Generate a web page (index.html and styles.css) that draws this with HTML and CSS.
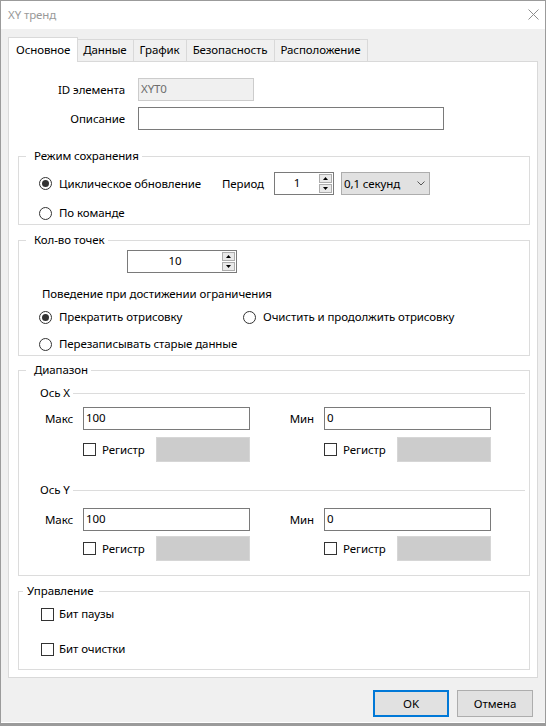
FILE: index.html
```html
<!DOCTYPE html>
<html lang="ru">
<head>
<meta charset="utf-8">
<title>XY тренд</title>
<link rel="stylesheet" href="styles.css">
</head>
<body>
<div class="window">
  <div class="titlebar">
    <span class="title">XY тренд</span>
    <svg class="close" width="11" height="11" viewBox="0 0 11 11"><path d="M0.5 0.5L10.5 10.5M10.5 0.5L0.5 10.5"/></svg>
  </div>
  <div class="client">
    <div class="tabs">
      <div class="tab active">Основное</div>
      <div class="tab">Данные</div>
      <div class="tab">График</div>
      <div class="tab">Безопасность</div>
      <div class="tab">Расположение</div>
    </div>
    <div class="page">
      <div class="form-row row-id">
        <span class="row-label">ID элемента</span>
        <div class="field field-id">XYT0</div>
      </div>
      <div class="form-row row-desc">
        <span class="row-label">Описание</span>
        <div class="field field-desc"></div>
      </div>

      <fieldset class="group group-save">
        <legend>Режим сохранения</legend>
        <div class="line line-cyclic">
          <span class="option opt-cyclic"><span class="radio checked"></span>Циклическое обновление</span>
          <span class="period">Период</span>
          <div class="spin spin-period">
            <span class="spin-value">1</span>
            <span class="spin-btns">
              <span class="spin-btn"><svg width="5" height="3" viewBox="0 0 5 3"><path d="M0 3L2.5 0L5 3Z"/></svg></span>
              <span class="spin-btn"><svg width="5" height="3" viewBox="0 0 5 3"><path d="M0 0L5 0L2.5 3Z"/></svg></span>
            </span>
          </div>
          <div class="combo">
            <span class="combo-value">0,1 секунд</span>
            <svg class="chevron" width="8" height="5" viewBox="0 0 8 5"><path d="M0.5 0.5L4 4L7.5 0.5"/></svg>
          </div>
        </div>
        <div class="line line-cmd">
          <span class="option"><span class="radio"></span>По команде</span>
        </div>
      </fieldset>

      <fieldset class="group group-points">
        <legend>Кол-во точек</legend>
        <div class="spin spin-points">
          <span class="spin-value">10</span>
          <span class="spin-btns">
            <span class="spin-btn"><svg width="5" height="3" viewBox="0 0 5 3"><path d="M0 3L2.5 0L5 3Z"/></svg></span>
            <span class="spin-btn"><svg width="5" height="3" viewBox="0 0 5 3"><path d="M0 0L5 0L2.5 3Z"/></svg></span>
          </span>
        </div>
        <div class="caption">Поведение при достижении ограничения</div>
        <div class="line line-limit">
          <span class="option opt-stop"><span class="radio checked"></span>Прекратить отрисовку</span>
          <span class="option"><span class="radio"></span>Очистить и продолжить отрисовку</span>
        </div>
        <div class="line line-overwrite">
          <span class="option"><span class="radio"></span>Перезаписывать старые данные</span>
        </div>
      </fieldset>

      <fieldset class="group group-range">
        <legend>Диапазон</legend>
        <div class="axis-head axis-x"><span>Ось X</span><span class="rule"></span></div>
        <div class="axis-grid limits">
          <span class="axis-label">Макс</span>
          <div class="field field-num">100</div>
          <span class="axis-label">Мин</span>
          <div class="field field-num">0</div>
        </div>
        <div class="axis-grid regs regs-x">
          <span></span>
          <div class="reg"><span class="check"></span><span class="reg-text">Регистр</span><span class="reg-box"></span></div>
          <span></span>
          <div class="reg"><span class="check"></span><span class="reg-text">Регистр</span><span class="reg-box"></span></div>
        </div>
        <div class="axis-head axis-y"><span>Ось Y</span><span class="rule"></span></div>
        <div class="axis-grid limits limits-y">
          <span class="axis-label">Макс</span>
          <div class="field field-num">100</div>
          <span class="axis-label">Мин</span>
          <div class="field field-num">0</div>
        </div>
        <div class="axis-grid regs regs-y">
          <span></span>
          <div class="reg"><span class="check"></span><span class="reg-text">Регистр</span><span class="reg-box"></span></div>
          <span></span>
          <div class="reg"><span class="check"></span><span class="reg-text">Регистр</span><span class="reg-box"></span></div>
        </div>
      </fieldset>

      <fieldset class="group group-control">
        <legend>Управление</legend>
        <div class="line line-pause"><span class="check"></span>Бит паузы</div>
        <div class="line line-clear"><span class="check"></span>Бит очистки</div>
      </fieldset>
    </div>
    <div class="buttons">
      <button class="btn btn-default">OK</button>
      <button class="btn">Отмена</button>
    </div>
  </div>
</div>
</body>
</html>
```

FILE: styles.css
```css
* { box-sizing: border-box; }

html, body {
  margin: 0;
  padding: 0;
  background: #ffffff;
}

body {
  font-family: "Noto Sans", "Open Sans", sans-serif;
  font-size: 11.5px;
  letter-spacing: -0.1px;
  color: #000;
  line-height: 16px;
}

/* window frame */
.window {
  width: 546px;
  height: 726px;
  border: 1px solid #9b9b9b;
  border-bottom-width: 3px;
  background: #f0f0f0;
  display: flex;
  flex-direction: column;
}

.titlebar {
  flex: none;
  height: 28px;
  background: #fff;
  display: flex;
  align-items: center;
  justify-content: space-between;
  padding: 0 6px 0 7px;
}

.title {
  color: #999;
}

.close {
  margin-top: -1px;
}

.close path {
  stroke: #8d8d8d;
  stroke-width: 1;
  fill: none;
}

.client {
  flex: 1;
  padding: 8px 0 0 7px;
  border-bottom: 1px solid #fff;
}

/* tab strip */
.tabs {
  display: flex;
  align-items: flex-end;
  height: 24px;
}

.tab {
  height: 22px;
  padding: 0 6px;
  margin-left: -1px;
  border: 1px solid #d9d9d9;
  border-bottom: none;
  background: #f0f0f0;
  line-height: 20px;
  white-space: nowrap;
}

.tab.active {
  position: relative;
  z-index: 1;
  height: 25px;
  margin: 0 -1px -1px 0;
  padding: 2px 7px 0;
  background: #fff;
  line-height: 20px;
}

/* tab page */
.page {
  width: 530px;
  height: 617px;
  background: #fff;
  border: 1px solid #d9d9d9;
  padding: 0 7px 0 9px;
}

.form-row {
  display: flex;
  align-items: center;
  height: 23px;
}

.row-id { margin-top: 16px; }
.row-desc { margin-top: 6px; }

.row-label {
  width: 107px;
  margin-right: 13px;
  text-align: right;
}

.field {
  height: 23px;
  border: 1px solid #7a7a7a;
  background: #fff;
  padding: 0 2px;
  line-height: 20px;
}

.field-id {
  width: 116px;
  border-color: #cccccc;
  background: #f0f0f0;
  color: #6d6d6d;
}

.field-desc { width: 306px; }

/* group boxes */
.group {
  margin: 0;
  padding: 0;
  min-width: 0;
  border: 1px solid #dcdcdc;
}

.group legend {
  margin-left: 7px;
  padding: 0 3px 0 8px;
  height: 16px;
  line-height: 16px;
}

.group-save { margin-top: 18px; padding-bottom: 2px; }
.group-points { margin-top: 7px; padding-bottom: 2px; }
.group-range { margin-top: 6px; padding-bottom: 14px; }
.group-control { margin-top: 7px; padding-bottom: 11px; }

.group-control legend {
  margin-left: 4px;
  padding: 0 6px 0 4px;
}

.line {
  display: flex;
  align-items: center;
  padding-left: 20px;
  height: 18px;
}

.line-cyclic { margin-top: 8px; height: 23px; }
.line-cmd { margin-top: 9px; }

.option {
  display: flex;
  align-items: center;
  white-space: nowrap;
}

.opt-cyclic { width: 183px; }
.opt-stop { width: 204px; }

.radio {
  flex: none;
  width: 13px;
  height: 13px;
  margin-right: 7px;
  border: 1px solid #333;
  border-radius: 50%;
  background: #fff;
  display: flex;
  align-items: center;
  justify-content: center;
}

.radio.checked::after {
  content: "";
  width: 7px;
  height: 7px;
  border-radius: 50%;
  background: #333;
}

.check {
  flex: none;
  width: 13px;
  height: 13px;
  border: 1px solid #333;
  background: #fff;
}

.period { width: 52px; }

/* numeric spinner */
.spin {
  display: flex;
  height: 23px;
  border: 1px solid #7a7a7a;
  background: #fff;
}

.spin-period { width: 60px; }

.spin-value {
  flex: 1;
  text-align: center;
  line-height: 20px;
}

.spin-btns {
  flex: none;
  width: 13px;
  margin-right: 1px;
  padding: 1px 0;
  display: flex;
  flex-direction: column;
  gap: 1px;
}

.spin-btn {
  height: 9px;
  border: 1px solid #acacac;
  background: #e9e9e9;
  display: flex;
  align-items: center;
  justify-content: center;
}

.spin-btn path { fill: #000; }

.spin-points {
  width: 110px;
  margin: 2px 0 0 108px;
}

/* drop-down */
.combo {
  width: 89px;
  height: 23px;
  margin-left: 7px;
  border: 1px solid #adadad;
  background: #e1e1e1;
  display: flex;
  align-items: center;
  justify-content: space-between;
  padding: 0 4px 0 2px;
}

.chevron path {
  fill: none;
  stroke: #555;
  stroke-width: 1;
}

.caption {
  margin-top: 13px;
  padding-left: 23px;
  height: 16px;
}

.line-limit { margin-top: 6px; }
.line-overwrite { margin-top: 9px; }

/* axis ranges */
.axis-head {
  display: flex;
  align-items: center;
  height: 16px;
  margin: 0 4px 0 21px;
}

.axis-x { margin-top: 7px; }
.axis-y { margin-top: 20px; }

.rule {
  flex: 1;
  height: 1px;
  margin-left: 3px;
  background: #dcdcdc;
}

.axis-grid {
  display: grid;
  grid-template-columns: 64px 167px 74px 167px;
  align-items: center;
}

.limits { margin-top: 6px; }
.limits-y { margin-top: 10px; }

.axis-label {
  text-align: right;
  padding-right: 10px;
}

.field-num { width: 167px; }

.regs-x { margin-top: 7px; }
.regs-y { margin-top: 5px; }

.reg {
  display: flex;
  align-items: center;
  height: 25px;
}

.reg .check { margin-right: 6px; }

.reg-text { width: 54px; }

.reg-box {
  width: 94px;
  height: 25px;
  background: #cccccc;
  border: 1px solid #d6d6d6;
}

/* control bits */
.group-control .line {
  padding-left: 22px;
}

.group-control .check { margin-right: 5px; }

.line-pause { margin-top: 6px; }
.line-clear { margin-top: 17px; }

/* dialog buttons */
.buttons {
  display: flex;
  justify-content: flex-end;
  gap: 8px;
  margin-top: 12px;
  padding-right: 12px;
}

.btn {
  width: 76px;
  height: 27px;
  border: 1px solid #adadad;
  background: #e1e1e1;
  font: inherit;
  color: #000;
  padding: 0;
}

.btn-default {
  border: 2px solid #0078d7;
}
```
